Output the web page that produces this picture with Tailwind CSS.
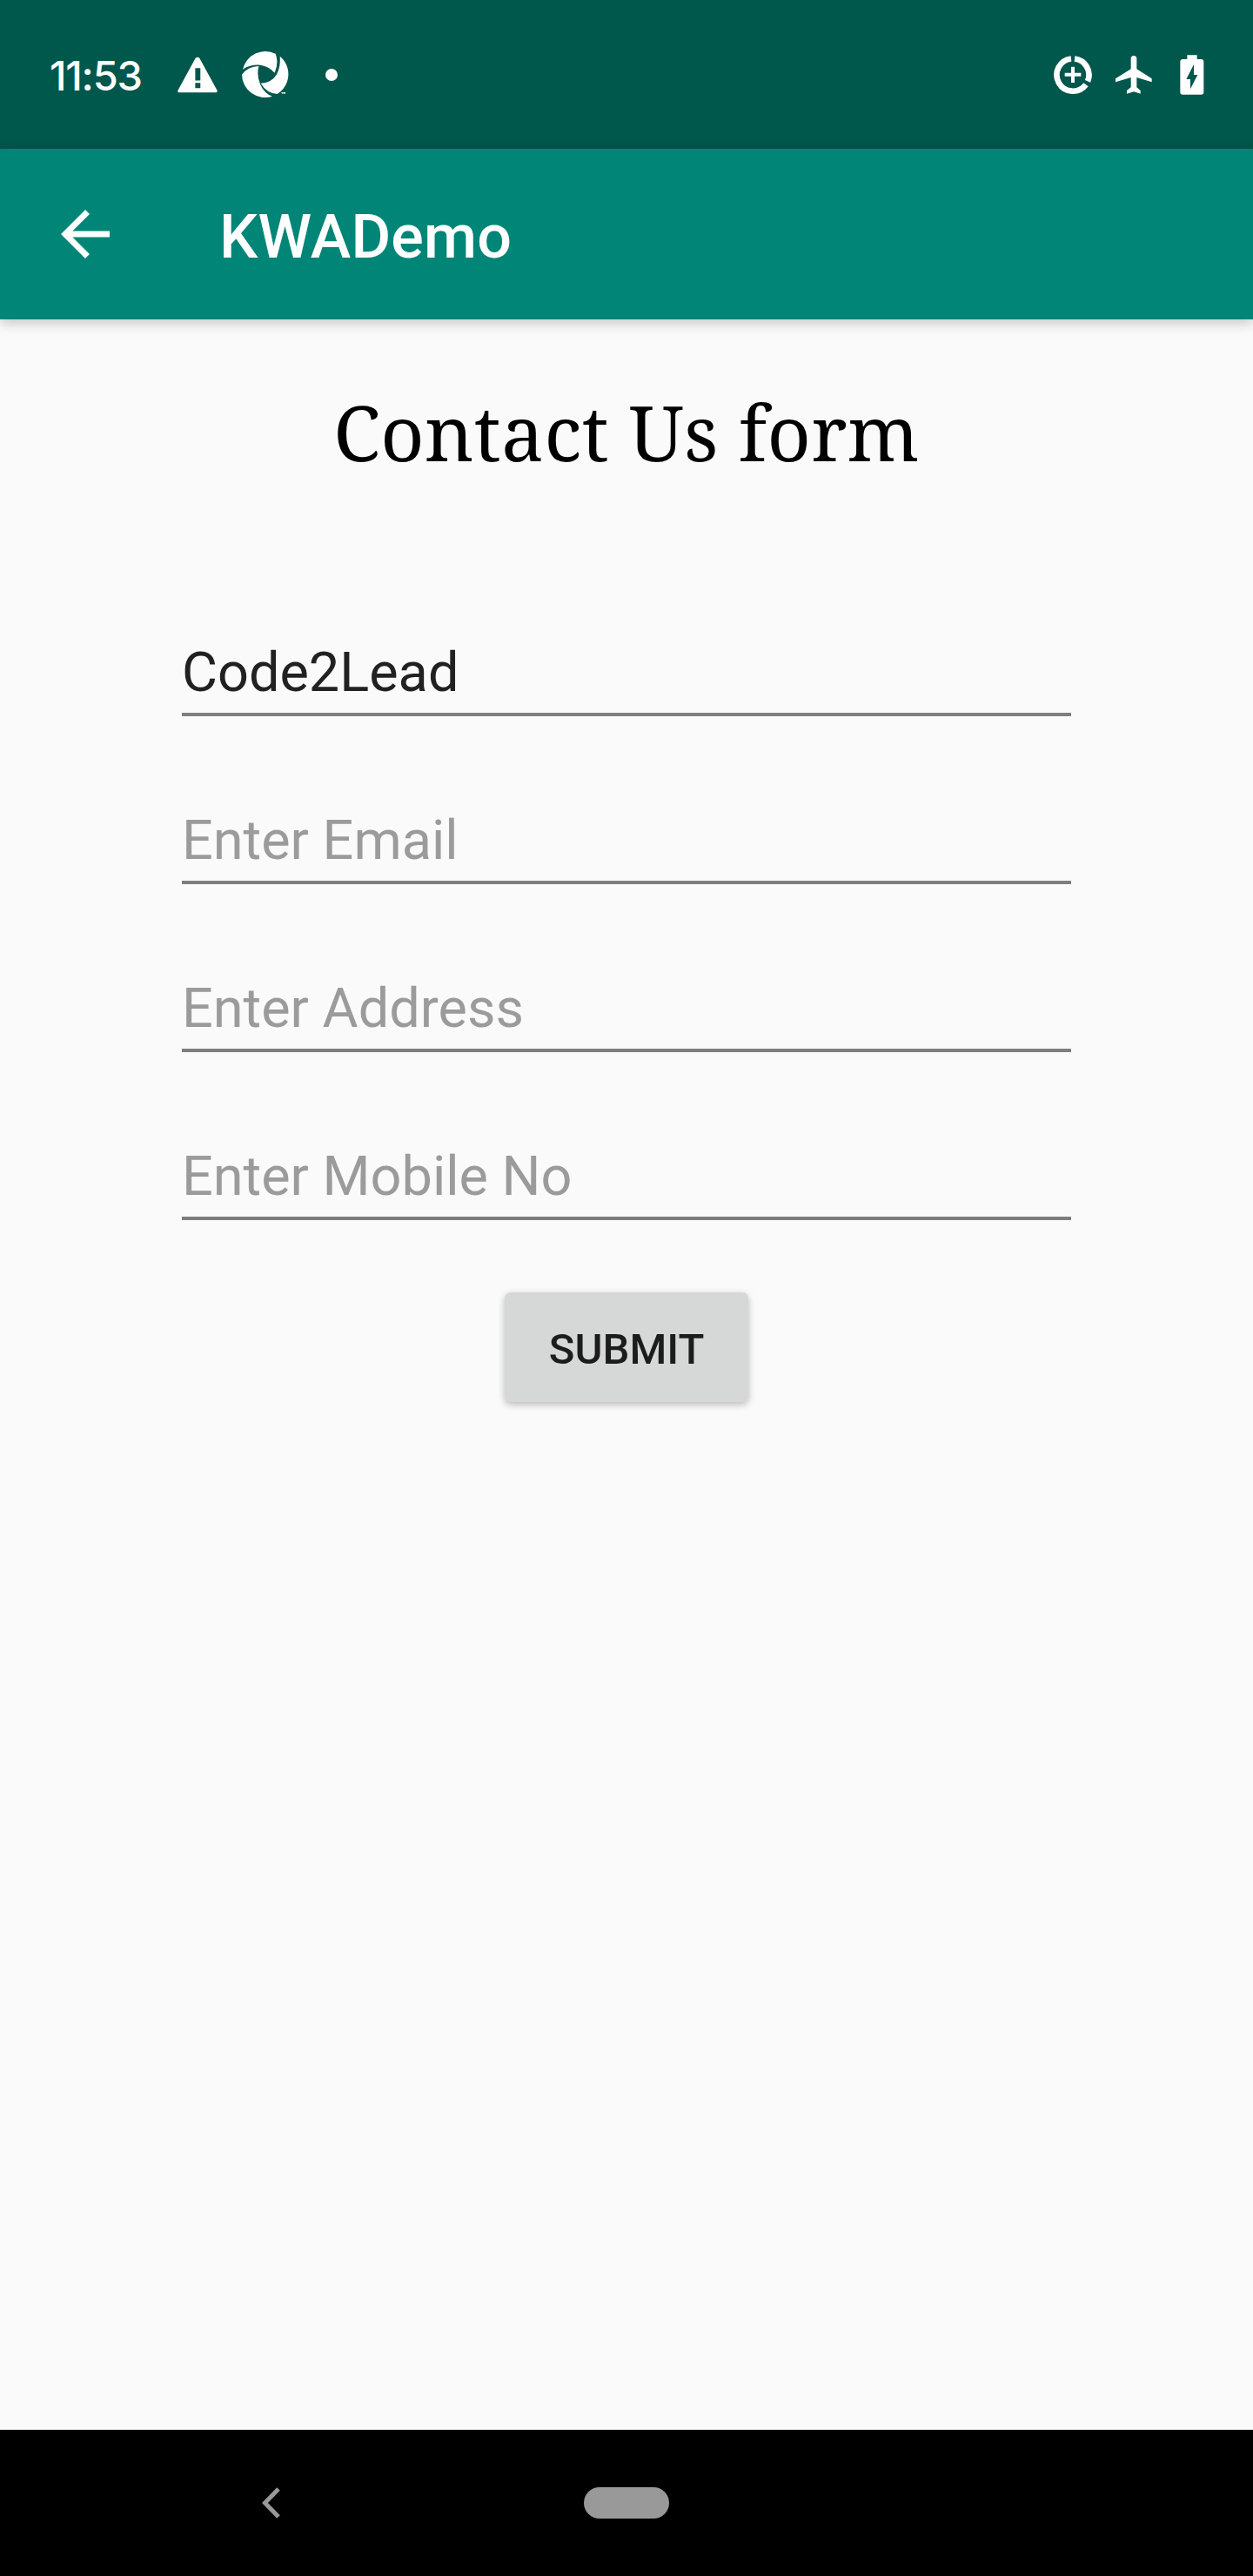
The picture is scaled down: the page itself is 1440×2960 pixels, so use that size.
<!DOCTYPE html>
<html lang="en">
<head>
<meta charset="utf-8">
<title>KWADemo</title>
<script src="https://cdn.jsdelivr.net/npm/@tailwindcss/browser@4"></script>
</head>
<body class="bg-[#fafafa] font-['Roboto',sans-serif]">
<div class="flex h-[2960px] w-[1440px] flex-col overflow-hidden">

  <!-- Status bar -->
  <header class="flex h-[171px] shrink-0 items-center bg-[#00574b] pr-[56px] pl-[57px] text-white">
    <span class="w-[147px] pt-[1px] font-['Inter',sans-serif] text-[47px] leading-none font-medium tracking-[-1.2px] whitespace-nowrap">11:53</span>
    <svg class="h-[42px] w-[46px]" viewBox="491 71 140 125" fill="currentColor"><path fill-rule="evenodd" d="M554 75Q561 68 568 75L629 187Q632 195 625 195H497Q489 195 493 187ZM553 110V153H571V110ZM553 162V180H571V162Z"/></svg>
    <svg class="ml-[27px] h-[55px] w-[56px]" viewBox="711 54 168 165" fill="currentColor">
      <path d="M717 119A80 80 0 0 1 830 65Q842 96 827 131Q805 107 776 104Q744 102 717 119Z"/>
      <path d="M845 74A80 80 0 0 1 836 204Q799 201 779 167Q816 166 833 138Q848 112 845 74Z"/>
      <path d="M714 137Q735 109 772 108Q764 140 777 170Q791 202 819 212A80 80 0 0 1 714 137Z"/>
      <path d="M850 198h6v2h-2v4h-2v-4h-2ZM857 198h7v6h-2v-3l-1 2-2-2v3h-2Z"/>
    </svg>
    <span class="ml-[41px] size-[14px] rounded-full bg-white"></span>
    <div class="ml-auto flex items-center">
      <svg class="h-[46px] w-[46px]" viewBox="61 67 138 138" fill="none" stroke="currentColor" stroke-width="20"><path d="M124 80.500A56 56 0 1 0 175 170M136 80.500A56 56 0 0 1 181 158"/><path stroke-width="12" d="M130 108V163M102 135.500H158"/></svg>
      <svg class="ml-[25px] h-[46px] w-[44px]" viewBox="274 67 132 138" fill="currentColor"><path d="M402 161V149L350 116V81Q350 70 340 70T330 81V116L277 149V161L330 145V179L316 190V201L340 194L363 201V190L350 179V145Z"/></svg>
      <svg class="ml-[31px] h-[46px] w-[28px]" viewBox="500 66 84 138" fill="currentColor"><path fill-rule="evenodd" d="M525 67H559V81H573Q582 81 582 90V195Q582 203 573 203H510Q501 203 501 195V90Q501 81 510 81H525ZM548 99L522 150H536V184L561 135H548Z"/></svg>
    </div>
  </header>

  <!-- App bar -->
  <div class="flex h-[196px] shrink-0 items-center bg-[#008577] pl-[56px] text-white shadow-[0_4px_14px_rgba(0,0,0,0.22)]">
    <svg class="size-[84px]" viewBox="0 0 24 24" fill="currentColor"><path d="M20 11H7.830l5.590-5.590L12 4l-8 8 8 8 1.410-1.410L7.830 13H20v-2z"/></svg>
    <h1 class="ml-[112px] pt-[6px] text-[70px] leading-none font-medium tracking-[0.2px]">KWADemo</h1>
  </div>

  <!-- Form -->
  <main class="flex flex-1 flex-col items-center">
    <h2 class="mt-[69px] h-[120px] font-['Noto_Serif','DejaVu_Serif_Condensed','DejaVu_Serif',serif] text-[87.5px] leading-[120px] tracking-[0.3px] whitespace-nowrap text-black">Contact Us form</h2>
    <form class="flex w-[1022px] flex-col items-center pt-[167px]">
      <div class="flex w-full flex-col gap-[93px] text-[63px] text-[#212121]">
        <input class="h-[100px] w-full border-b-[4px] border-[#7e7e7e] pt-[3px] outline-none placeholder:text-[#9b9b9b]" value="Code2Lead">
        <input class="h-[100px] w-full border-b-[4px] border-[#7e7e7e] pt-[3px] outline-none placeholder:text-[#9b9b9b]" placeholder="Enter Email">
        <input class="h-[100px] w-full border-b-[4px] border-[#7e7e7e] pt-[3px] outline-none placeholder:text-[#9b9b9b]" placeholder="Enter Address">
        <input class="h-[100px] w-full border-b-[4px] border-[#7e7e7e] pt-[3px] outline-none placeholder:text-[#9b9b9b]" placeholder="Enter Mobile No">
      </div>
      <button type="button" class="mt-[83px] h-[126px] w-[280px] rounded-[7px] bg-[#d6d8d7] pt-[5px] text-[49px] leading-none font-medium text-[#1c1c1c] shadow-[0_3px_8px_rgba(0,0,0,0.26)]">SUBMIT</button>
    </form>
  </main>

  <!-- Navigation bar -->
  <nav class="flex h-[168px] shrink-0 items-center bg-black pl-[301px] text-[#999999]">
    <svg class="h-[36px] w-[21px]" viewBox="0 0 21 36" fill="none" stroke="currentColor" stroke-width="5"><path d="M19 2L3.500 18 19 34"/></svg>
    <span class="ml-[349px] h-[36px] w-[98px] rounded-full bg-[#999999]"></span>
  </nav>
</div>
</body>
</html>
